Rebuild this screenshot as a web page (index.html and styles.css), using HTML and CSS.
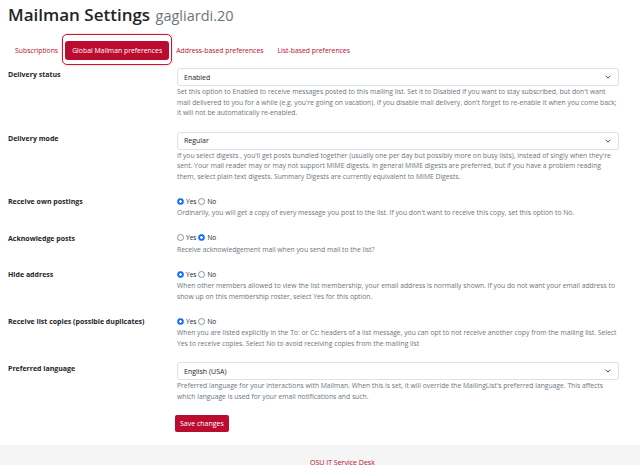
FILE: index.html
```html
<!DOCTYPE html>
<html lang="en">
<head>
<meta charset="utf-8">
<title>Mailman Settings</title>
<link rel="stylesheet" href="styles.css">
</head>
<body>
<div class="page">
  <h1 class="title">Mailman Settings <small class="subtitle">gagliardi.20</small></h1>
  <nav class="tabs">
    <a class="tab" href="#">Subscriptions</a>
    <a class="tab active" href="#">Global Mailman preferences</a>
    <a class="tab" href="#">Address-based preferences</a>
    <a class="tab" href="#">List-based preferences</a>
  </nav>
  <form class="settings">
    <div class="row">
      <label class="lbl">Delivery status</label>
      <div class="ctl">
        <div class="select"><span>Enabled</span><svg class="chev" viewBox="0 0 8 5" width="6" height="4"><path d="M1 1l3 3 3-3" fill="none" stroke="#343a40" stroke-width="1.3"/></svg></div>
        <p class="help">Set this option to Enabled to receive messages posted to this mailing list. Set it to Disabled if you want to stay subscribed, but don't want mail delivered to you for a while (e.g. you're going on vacation). If you disable mail delivery, don't forget to re-enable it when you come back; it will not be automatically re-enabled.</p>
      </div>
    </div>
    <div class="row">
      <label class="lbl">Delivery mode</label>
      <div class="ctl">
        <div class="select"><span>Regular</span><svg class="chev" viewBox="0 0 8 5" width="6" height="4"><path d="M1 1l3 3 3-3" fill="none" stroke="#343a40" stroke-width="1.3"/></svg></div>
        <p class="help">If you select digests , you'll get posts bundled together (usually one per day but possibly more on busy lists), instead of singly when they're sent. Your mail reader may or may not support MIME digests. In general MIME digests are preferred, but if you have a problem reading them, select plain text digests. Summary Digests are currently equivalent to MIME Digests.</p>
      </div>
    </div>
    <div class="row">
      <label class="lbl">Receive own postings</label>
      <div class="ctl">
        <div class="radios"><span class="radio on"></span><span class="rl">Yes</span><span class="radio"></span><span class="rl">No</span></div>
        <p class="help">Ordinarily, you will get a copy of every message you post to the list. If you don't want to receive this copy, set this option to No.</p>
      </div>
    </div>
    <div class="row">
      <label class="lbl">Acknowledge posts</label>
      <div class="ctl">
        <div class="radios"><span class="radio"></span><span class="rl">Yes</span><span class="radio on"></span><span class="rl">No</span></div>
        <p class="help">Receive acknowledgement mail when you send mail to the list?</p>
      </div>
    </div>
    <div class="row">
      <label class="lbl">Hide address</label>
      <div class="ctl">
        <div class="radios"><span class="radio on"></span><span class="rl">Yes</span><span class="radio"></span><span class="rl">No</span></div>
        <p class="help">When other members allowed to view the list membership, your email address is normally shown. If you do not want your email address to show up on this membership roster, select Yes for this option.</p>
      </div>
    </div>
    <div class="row">
      <label class="lbl">Receive list copies (possible duplicates)</label>
      <div class="ctl">
        <div class="radios"><span class="radio on"></span><span class="rl">Yes</span><span class="radio"></span><span class="rl">No</span></div>
        <p class="help">When you are listed explicitly in the To: or Cc: headers of a list message, you can opt to not receive another copy from the mailing list. Select Yes to receive copies. Select No to avoid receiving copies from the mailing list</p>
      </div>
    </div>
    <div class="row">
      <label class="lbl">Preferred language</label>
      <div class="ctl">
        <div class="select"><span>English (USA)</span><svg class="chev" viewBox="0 0 8 5" width="6" height="4"><path d="M1 1l3 3 3-3" fill="none" stroke="#343a40" stroke-width="1.3"/></svg></div>
        <p class="help">Preferred language for your interactions with Mailman. When this is set, it will override the MailingList's preferred language. This affects which language is used for your email notifications and such.</p>
      </div>
    </div>
    <div class="row">
      <span></span>
      <div class="ctl"><button type="button" class="btn">Save changes</button></div>
    </div>
  </form>
</div>
<footer class="footer"><a href="#" class="foot-link">OSU IT Service Desk</a></footer>
</body>
</html>
```

FILE: styles.css
```css
html, body { margin: 0; padding: 0; background: #fff; }
body {
  font-family: "Open Sans", "Noto Sans", sans-serif;
  color: #212529;
  font-size: 7px;
}
.page { padding: 0 21px 0 8px; }
.title {
  margin: 0;
  padding-top: 3px;
  height: 33px;
  font-size: 17px;
  font-weight: 600;
  line-height: 24px;
  color: #212529;
}
.subtitle { font-size: 14.5px; font-weight: 500; color: #6c757d; margin-left: 1px; }
.tabs { display: flex; align-items: center; height: 28px; }
.tab {
  color: #ba0c2f;
  text-decoration: none;
  font-size: 6.85px;
  padding: 0 7px;
  height: 19px;
  line-height: 19px;
  border-radius: 3px;
  position: relative;
}
.tab.active { background: #ba0c2f; color: #fff; }
.tab.active::after {
  content: "";
  position: absolute;
  left: -3px; right: -3px; top: -7px; bottom: -5px;
  border: 1.5px solid #d2102f;
  border-radius: 5px;
  box-shadow: 0 0 2px rgba(186, 12, 47, 0.35);
}
.settings { padding-top: 4px; }
.row {
  display: grid;
  grid-template-columns: 169px 442px;
  margin-bottom: 13px;
}
.lbl {
  font-weight: 700;
  font-size: 7px;
  line-height: 12px;
  padding-top: 1px;
}
.select {
  height: 18px;
  box-sizing: border-box;
  border: 1px solid #dee2e6;
  border-radius: 3px;
  display: flex;
  align-items: center;
  justify-content: space-between;
  padding: 0 7px 0 6px;
  font-size: 7px;
}
.help {
  margin: 1px 0 0;
  color: #6c757d;
  font-size: 6.78px;
  line-height: 10.5px;
}
.radios {
  display: flex;
  align-items: center;
  height: 12px;
  font-size: 6.5px;
  color: #212529;
}
.radio {
  width: 5px; height: 5px;
  border: 0.8px solid #8a9199;
  border-radius: 50%;
  margin-right: 2px;
  box-sizing: content-box;
}
.radio.on {
  background: radial-gradient(circle, #fff 0 1.2px, #0d6efd 1.5px);
  border-color: #0d6efd;
}
.rl { margin-right: 2px; }
.btn {
  font-family: inherit;
  font-size: 7px;
  color: #fff;
  background: #ba0c2f;
  border: 0;
  border-radius: 2px;
  height: 17px;
  padding: 0 5px;
  margin-left: -2px;
  cursor: pointer;
}
.footer {
  margin-top: 5px;
  background: #f5f5f5;
  height: 40px;
  padding-top: 13px;
  padding-left: 310px;
  box-sizing: border-box;
}
.foot-link { color: #ba0c2f; text-decoration: none; font-size: 7px; }
```
